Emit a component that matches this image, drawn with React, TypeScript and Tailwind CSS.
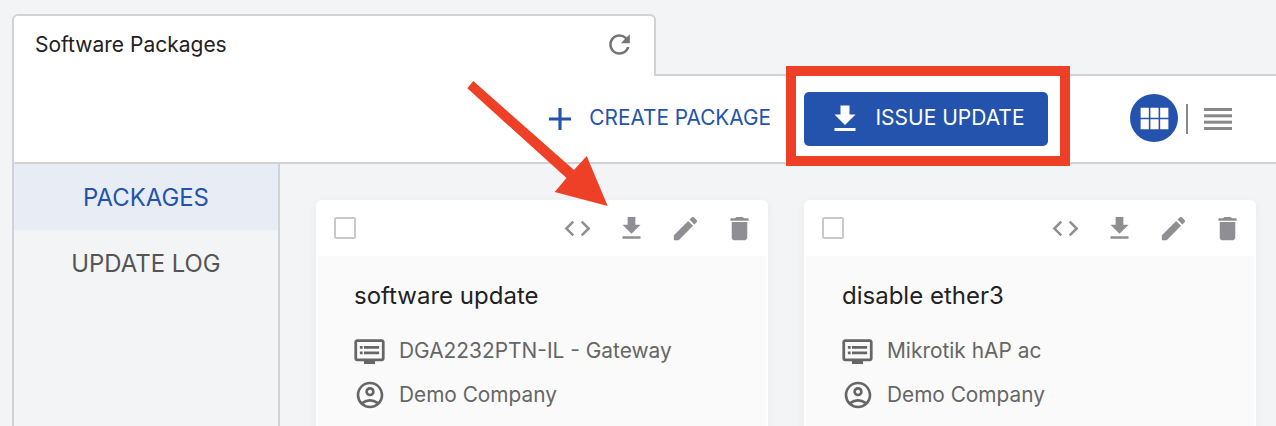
import { MdAdd, MdCode, MdDelete, MdEdit, MdFileDownload, MdOutlineAccountCircle, MdOutlineDvr, MdRefresh, MdViewModule } from "react-icons/md";

function Card({ title, device }: { title: string; device: string }) {
  return (
    <div className="w-[452px] h-[260px] shrink-0 rounded-t-[6px] bg-white px-[2px] shadow-[0_2px_10px_rgba(0,0,0,0.05)]">
      <div className="h-[56px] flex items-center pl-[16px] pr-[11px]">
        <div className="w-[22px] h-[22px] rounded-[2px] border-2 border-[#c8c8c8] bg-white" />
        <div className="ml-auto flex items-center gap-[23px] text-[#8e8e93]">
          <MdCode size={31} />
          <MdFileDownload size={31} />
          <MdEdit size={31} />
          <MdDelete size={31} />
        </div>
      </div>
      <div className="h-[204px] bg-[#fafafa] pl-[36px] pt-[26px]">
        <div className="text-[24px] leading-[28px] text-[#222]">{title}</div>
        <div className="mt-[27px] flex items-center h-[28px] text-[20.9px] text-[#666]">
          <MdOutlineDvr className="w-[33px] h-[33px] shrink-0 -ml-[1px]" />
          <span className="ml-[13px]">{device}</span>
        </div>
        <div className="mt-[16px] flex items-center h-[28px] text-[20.8px] text-[#666]">
          <MdOutlineAccountCircle className="w-[32px] h-[32px] shrink-0" />
          <span className="ml-[13px]">Demo Company</span>
        </div>
      </div>
    </div>
  );
}

export default function App() {
  return (
    <div className="relative h-[426px] w-[1276px] overflow-hidden bg-[#f3f4f6] pt-[14px] pl-[12px] font-['Inter',sans-serif]">
      <div className="flex h-[62px]">
        <div className="w-[644px] h-[62px] shrink-0 rounded-t-[6px] border-2 border-b-0 border-[#d2d2d4] bg-white flex items-center pl-[21px] pr-[19px] pb-[4px] z-10">
          <span className="text-[21px] leading-[28px] text-[#222] pt-[2px]">Software Packages</span>
          <MdRefresh size={31} className="ml-auto text-[#757575]" />
        </div>
        <div className="flex-1 border-b-2 border-[#d2d2d4]" />
      </div>
      <div className="h-[90px] -mt-[2px] pt-[2px] bg-white border-l-2 border-b-2 border-[#d2d2d4] flex items-center">
        <div className="ml-auto flex items-center text-[#2353ad]">
          <MdAdd size={38} className="-mt-[1px]" />
          <span className="ml-[10px] pb-[3px] text-[20.8px]">CREATE PACKAGE</span>
        </div>
        <button className="ml-[33px] w-[244px] h-[54px] rounded-[5px] bg-[#2353ad] text-white flex items-center justify-center text-[21px]">
          <MdFileDownload size={36} className="-mt-[1px]" />
          <span className="ml-[12px] pb-[3px]">ISSUE UPDATE</span>
        </button>
        <div className="ml-[82px] -mt-[2px] w-[48px] h-[48px] rounded-full bg-[#2353ad] flex items-center justify-center">
          <MdViewModule size={37} className="text-white" />
        </div>
        <div className="ml-[8px] w-[2px] h-[30px] bg-[#888]" />
        <svg width="28" height="22" viewBox="0 0 28 22" className="ml-[16px] mr-[44px] shrink-0" fill="#888">
          <rect x="0" y="0" width="28" height="3" />
          <rect x="0" y="6.33" width="28" height="3" />
          <rect x="0" y="12.67" width="28" height="3" />
          <rect x="0" y="19" width="28" height="3" />
        </svg>
      </div>
      <div className="flex border-l-2 border-[#d2d2d4] h-[262px]">
        <div className="w-[266px] shrink-0 border-r-2 border-[#d2d2d4] text-[23.9px] text-center">
          <div className="h-[66px] pt-[2px] bg-[#e8ecf4] text-[#2353ad] flex items-center justify-center">PACKAGES</div>
          <div className="h-[66px] pt-[2px] text-[#555] flex items-center justify-center">UPDATE LOG</div>
        </div>
        <div className="flex gap-[36px] pl-[36px] pt-[36px]">
          <Card title="software update" device="DGA2232PTN-IL - Gateway" />
          <Card title="disable ether3" device="Mikrotik hAP ac" />
        </div>
      </div>
      <div className="absolute left-[786px] top-[66px] w-[284px] h-[100px] border-[10px] border-[#ee4026]" />
      <svg className="absolute left-0 top-0 pointer-events-none" width="1276" height="426">
        <polygon fill="#ee4026" points="467.3,88.3 473.3,81 574,170 586.7,156 607.7,206 554.7,192 566.5,178" />
      </svg>
    </div>
  );
}
